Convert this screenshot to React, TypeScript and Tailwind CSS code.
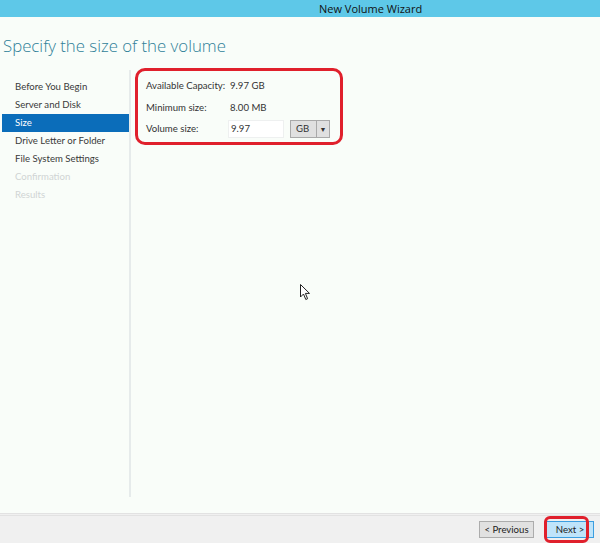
const steps = [
  { label: "Before You Begin", state: "done" },
  { label: "Server and Disk", state: "done" },
  { label: "Size", state: "current" },
  { label: "Drive Letter or Folder", state: "todo" },
  { label: "File System Settings", state: "todo" },
  { label: "Confirmation", state: "off" },
  { label: "Results", state: "off" },
];

function Cursor() {
  return (
    <svg width="11" height="17" viewBox="0 0 11 17" className="absolute left-[300px] top-[284px]">
      <path d="M0.5 0.5 L0.5 13 L3.5 10 L5.8 15.5 L7.6 14.7 L5.4 9.4 L9.5 9.4 Z" fill="#fff" stroke="#222" strokeWidth="1" />
    </svg>
  );
}

export default function App() {
  return (
    <div
      className="relative flex h-[543px] w-[600px] flex-col overflow-hidden whitespace-nowrap bg-[#f9fdf9] text-[9.6px] text-[#333]"
      style={{ fontFamily: 'Lato, "Open Sans", sans-serif' }}
    >
      <div
        className="h-[17px] shrink-0 bg-[#5ec8e8] pl-[319px] text-[11px] leading-[17px] text-[#111]"
        style={{ fontFamily: '"Open Sans", sans-serif' }}
      >
        New Volume Wizard
      </div>

      <div className="h-[51px] shrink-0 pl-[3px] pt-[17px]">
        <h1
          className="text-[16.8px] font-light leading-[24px] text-[#2f7f98]"
          style={{ fontFamily: '"Open Sans", sans-serif' }}
        >
          Specify the size of the volume
        </h1>
      </div>

      <div className="flex flex-1 pb-[16px]">
        <nav className="mt-[2px] w-[131px] shrink-0 border-r-2 border-[#e6ebeb] pt-[8px]">
          {steps.map((s) => (
            <div
              key={s.label}
              className={
                s.state === "current"
                  ? "ml-[2px] h-[18px] bg-[#0b6dba] pl-[13px] leading-[18px] text-white"
                  : s.state === "off"
                    ? "ml-[2px] h-[18px] pl-[13px] leading-[18px] text-[#d0d4d4]"
                    : "ml-[2px] h-[18px] pl-[13px] leading-[18px] text-[#3a3a3a]"
              }
            >
              {s.label}
            </div>
          ))}
        </nav>

        <div className="flex-1 pl-[4px]">
          <div className="w-[208px] rounded-[10px] border-[3px] border-[#e0202c] pb-[4px] pl-[8px] pt-[7px]">
            <div className="flex h-[16px] items-center">
              <span className="w-[82px]">Available Capacity:</span>
              <span className="pl-[2px]">9.97 GB</span>
            </div>
            <div className="mt-[6px] flex h-[16px] items-center">
              <span className="w-[82px]">Minimum size:</span>
              <span className="pl-[2px]">8.00 MB</span>
            </div>
            <div className="mt-[4px] flex h-[18px] items-center">
              <span className="w-[82px]">Volume size:</span>
              <div className="flex h-[18px] w-[56px] items-center border border-[#eef0f0] bg-white pl-[2px]">9.97</div>
              <div className="ml-[6px] flex h-[18px] w-[40px] border border-[#a9a9a9] bg-[#e0e0e0]">
                <span className="flex-1 pl-[5px] leading-[16px]">GB</span>
                <span className="flex w-[13px] items-center justify-center border-l border-[#a9a9a9] text-[7px]">▼</span>
              </div>
            </div>
          </div>
        </div>
      </div>

      <div className="flex h-[30px] shrink-0 items-start justify-end gap-[12px] border-t-[3px] border-double border-[#e2e2e2] bg-[#f0f0f0] pr-[6px] pt-[5px]">
        <button className="h-[17px] w-[55px] border border-[#acacac] bg-[#e1e1e1] text-[9.6px] leading-[15px] text-[#222]">
          &lt; Previous
        </button>
        <button className="relative h-[17px] w-[48px] border border-[#3c9ee0] bg-[#bfe4fa] text-[9.6px] leading-[15px] text-[#222]">
          Next &gt;
          <span className="absolute left-[-3px] top-[-6px] h-[27px] w-[45px] rounded-[6px] border-[3px] border-[#e0202c]" />
        </button>
      </div>

      <Cursor />
    </div>
  );
}
